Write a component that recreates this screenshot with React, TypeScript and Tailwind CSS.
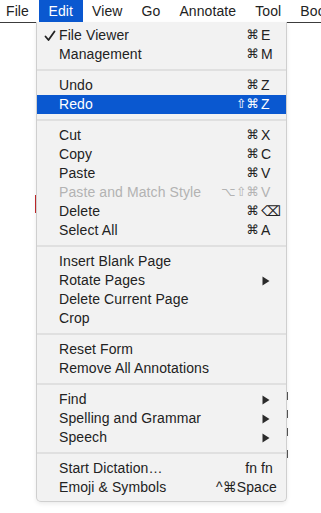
import React from "react";

type Item =
  | { kind: "sep" }
  | {
      kind?: "item";
      label: string;
      mods?: string;
      keyName?: string;
      sub?: boolean;
      checked?: boolean;
      active?: boolean;
      disabled?: boolean;
      wide?: boolean;
    };

const ITEMS: Item[] = [
  { label: "File Viewer", mods: "⌘", keyName: "E", checked: true },
  { label: "Management", mods: "⌘", keyName: "M" },
  { kind: "sep" },
  { label: "Undo", mods: "⌘", keyName: "Z" },
  { label: "Redo", mods: "⇧⌘", keyName: "Z", active: true },
  { kind: "sep" },
  { label: "Cut", mods: "⌘", keyName: "X" },
  { label: "Copy", mods: "⌘", keyName: "C" },
  { label: "Paste", mods: "⌘", keyName: "V" },
  { label: "Paste and Match Style", mods: "⌥⇧⌘", keyName: "V", disabled: true },
  { label: "Delete", mods: "⌘", keyName: "⌫" },
  { label: "Select All", mods: "⌘", keyName: "A" },
  { kind: "sep" },
  { label: "Insert Blank Page" },
  { label: "Rotate Pages", sub: true },
  { label: "Delete Current Page" },
  { label: "Crop" },
  { kind: "sep" },
  { label: "Reset Form" },
  { label: "Remove All Annotations" },
  { kind: "sep" },
  { label: "Find", sub: true },
  { label: "Spelling and Grammar", sub: true },
  { label: "Speech", sub: true },
  { kind: "sep" },
  { label: "Start Dictation…", mods: "fn fn", wide: true },
  { label: "Emoji & Symbols", mods: "^⌘Space", wide: true },
];

const BAR = ["File", "Edit", "View", "Go", "Annotate", "Tool", "Bookmark"];

function Check() {
  return (
    <svg width="12" height="12" viewBox="0 0 12 12" className="absolute left-[7px] top-[4px]">
      <path d="M1.5 6.5 L4.5 10 L10.5 1.5" fill="none" stroke="#222" strokeWidth="1.8" strokeLinecap="round" strokeLinejoin="round" />
    </svg>
  );
}

function Arrow() {
  return (
    <svg width="8" height="10" viewBox="0 0 8 10" className="mr-[16px]">
      <path d="M0.5 0.5 L7.5 5 L0.5 9.5 Z" fill="#2b2b2b" />
    </svg>
  );
}

function Row({ item }: { item: Extract<Item, { label: string }> }) {
  const color = item.active ? "text-white" : item.disabled ? "text-[#b3b3b3]" : "text-[#222]";
  return (
    <div
      className={`relative flex h-[19px] items-center pl-[22px] ${color} ${item.active ? "bg-[#0a58d0]" : ""}`}
    >
      {item.checked && <Check />}
      <span className="flex-1 whitespace-nowrap">{item.label}</span>
      {item.sub && <Arrow />}
      {item.mods && item.wide && (
        <span className={`whitespace-nowrap ${item.mods === "fn fn" ? "mr-[13px]" : "mr-[9px]"}`}>{item.mods}</span>
      )}
      {item.mods && !item.wide && (
        <span className="mr-[13px] flex items-center whitespace-nowrap">
          <span className="pr-[2px] text-[12.5px]">{item.mods}</span>
          <span className="w-[12px] text-left">{item.keyName}</span>
        </span>
      )}
    </div>
  );
}

export default function App() {
  return (
    <div
      className="relative h-[513px] w-[321px] overflow-hidden bg-white text-[14px] tracking-[0.1px]"
      style={{ fontFamily: '"Liberation Sans", "DejaVu Sans", sans-serif' }}
    >
      <div className="flex h-[23px] items-center border-b border-[#3c3c3c] text-[#222]">
        {BAR.map((b, i) => (
          <div
            key={b}
            className={`flex h-[22px] items-center whitespace-nowrap ${i === 0 ? "pl-[6px] pr-[10px]" : "px-[9.5px]"} ${
              b === "Edit" ? "bg-[#0a58d0] text-white" : ""
            }`}
          >
            {b}
          </div>
        ))}
      </div>

      {/* faint content behind the menu */}
      <div className="absolute left-[35px] top-[195px] h-[18px] w-px bg-[#c0292b]" />
      <div className="absolute left-[287px] top-[392px] h-[8px] w-px bg-[#555]" />
      <div className="absolute left-[287px] top-[410px] h-[8px] w-px bg-[#555]" />
      <div className="absolute left-[287px] top-[428px] h-[8px] w-px bg-[#555]" />
      <div className="absolute left-[287px] top-[450px] h-[8px] w-px bg-[#555]" />

      <div className="absolute left-[36px] top-[22px] w-[251px] rounded-b-[5px] border border-t-0 border-[#cfcfcf] bg-[#f2f2f2] pt-[4px] pb-[4px] shadow-[0_2px_4px_rgba(0,0,0,0.08)]">
        {ITEMS.map((it, i) =>
          it.kind === "sep" ? (
            <div key={i} className="flex h-[12px] items-center">
              <div className="h-[2px] w-full bg-[#e0e0e0]" />
            </div>
          ) : (
            <Row key={i} item={it as Extract<Item, { label: string }>} />
          )
        )}
      </div>
    </div>
  );
}
